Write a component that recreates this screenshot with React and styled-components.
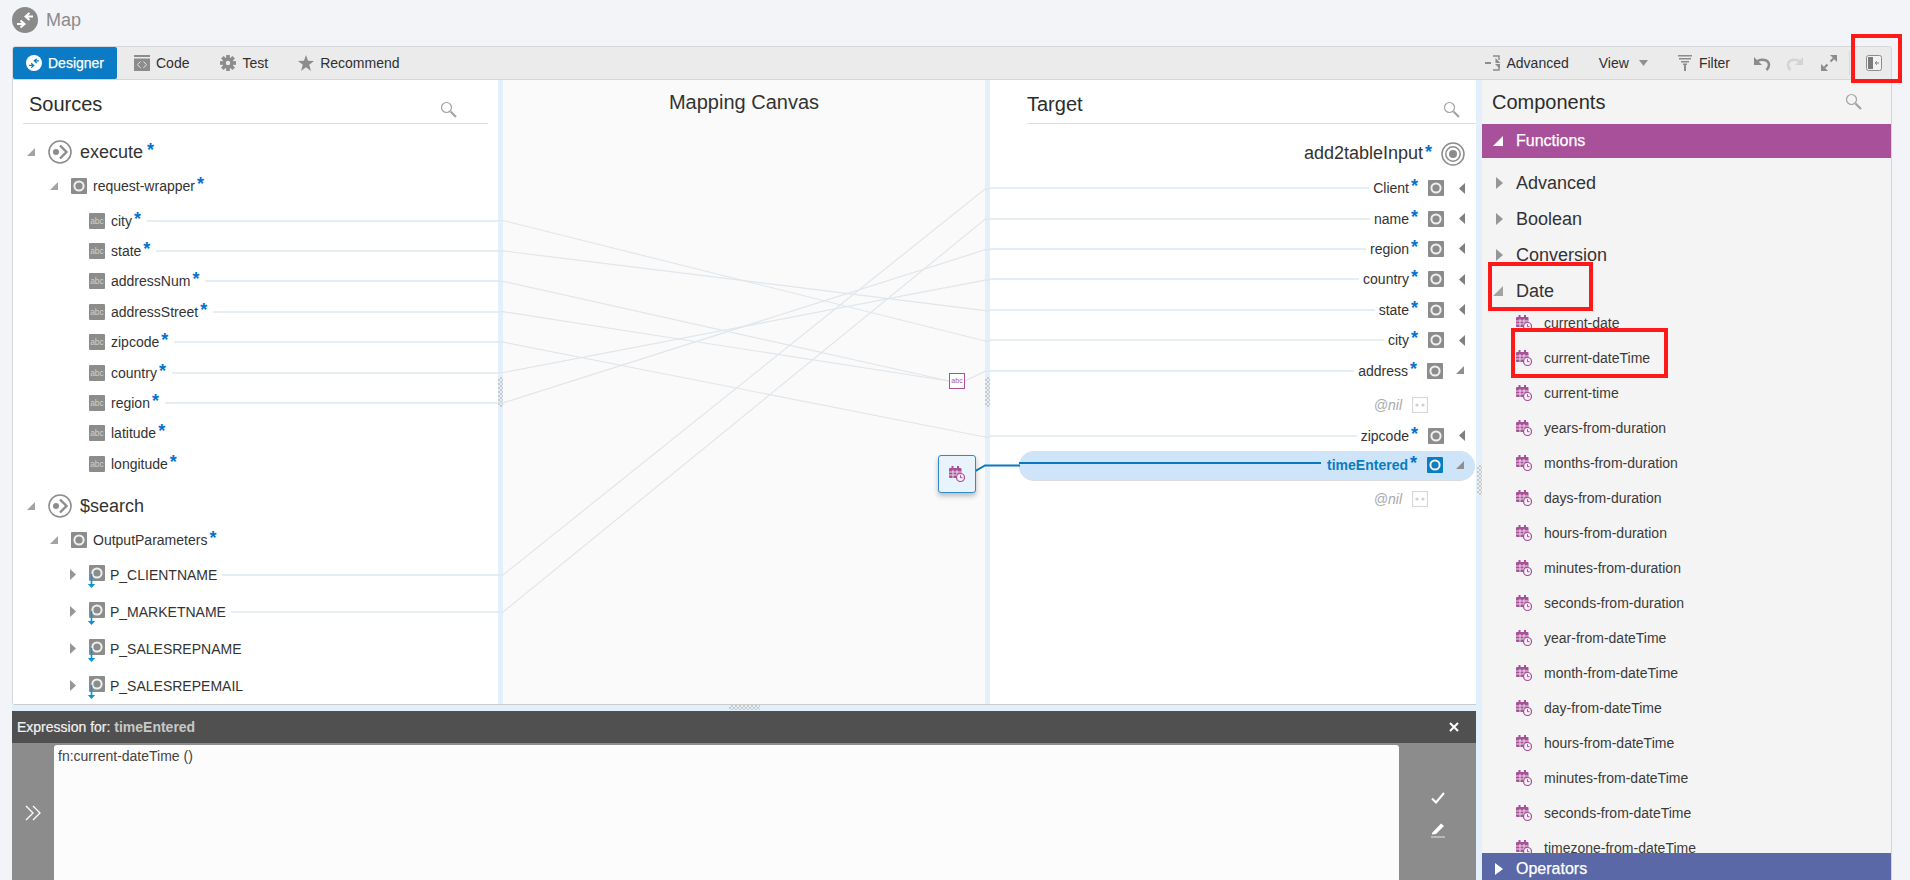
import React from "react";
import styled, { createGlobalStyle } from "styled-components";

const Global = createGlobalStyle`
  html, body { margin: 0; padding: 0; background: #f3f4f7; }
  body { font-family: "Liberation Sans", Arial, sans-serif; color: #333; font-size: 14px; }
`;

const Page = styled.div`
  position: relative;
  width: 1910px;
  height: 880px;
  overflow: hidden;
  background: #f3f4f7;
  display: flex;
  flex-direction: column;
`;
const Header = styled.header`
  height: 46px;
  flex: none;
  display: flex;
  align-items: flex-start;
  padding: 7px 0 0 12px;
  box-sizing: border-box;
  gap: 8px;
`;
const PageTitle = styled.span`
  font-size: 18px;
  line-height: 26px;
  color: #8b8b8b;
`;
const Toolbar = styled.div`
  flex: none;
  height: 34px;
  margin: 0 18px 0 12px;
  box-sizing: border-box;
  background: #ebebeb;
  border: 1px solid #d7d7d7;
  border-radius: 3px 3px 0 0;
  display: flex;
  align-items: center;
  justify-content: space-between;
`;
const ToolGroup = styled.div`
  display: flex;
  align-items: center;
  height: 100%;
`;
const ActiveTab = styled.div`
  height: 100%;
  width: 104px;
  box-sizing: border-box;
  padding-left: 13px;
  display: flex;
  align-items: center;
  gap: 6px;
  background: #0a7bc4;
  color: #fff;
  border-radius: 2px;
  -webkit-text-stroke: 0.25px #fff;
`;
const ToolItem = styled.div`
  display: flex;
  align-items: center;
  gap: ${(p) => p.$gap ?? 6}px;
  margin-left: ${(p) => p.$ml ?? 0}px;
  color: #2f2f2f;
`;
const ToolSep = styled.div`
  width: 1px;
  height: 24px;
  background: #d8d8d8;
  margin-left: 12px;
`;
const Workspace = styled.div`
  flex: 1;
  min-height: 0;
  margin: 0 18px 0 12px;
  display: flex;
`;
const LeftColumn = styled.div`
  width: 1464px;
  flex: none;
  display: flex;
  flex-direction: column;
`;
const PanelsRow = styled.div`
  position: relative;
  height: 625px;
  flex: none;
  box-sizing: border-box;
  display: flex;
  background: #fff;
  border-left: 1px solid #d6d9dc;
  border-bottom: 1px solid #ccc;
  border-radius: 0 0 0 3px;
  overflow: hidden;
`;
const Pane = styled.section`
  width: ${(p) => p.$w}px;
  flex: none;
  background: ${(p) => p.$bg || "#fff"};
  overflow: hidden;
  min-width: 0;
`;
const Divider = styled.div`
  width: ${(p) => p.$w || 5}px;
  flex: none;
  background: #e3effb;
  display: flex;
  align-items: center;
  justify-content: center;
  box-sizing: border-box;
`;
const GripV = styled.div`
  width: 5px;
  height: 30px;
  background: conic-gradient(#c9c9c9 25%, transparent 0 50%, #c9c9c9 0 75%, transparent 0) 0 0 / 4px 4px;
`;
const GripH = styled.div`
  width: 31px;
  height: 5px;
  background: conic-gradient(#c9c9c9 25%, transparent 0 50%, #c9c9c9 0 75%, transparent 0) 0 0 / 4px 4px;
`;
const PaneHead = styled.div`
  height: 44px;
  box-sizing: border-box;
  margin: 0 ${(p) => p.$mr ?? 0}px 0 ${(p) => p.$ml ?? 0}px;
  padding: 0 ${(p) => p.$pr ?? 0}px 0 ${(p) => p.$pl ?? 0}px;
  border-bottom: 1px solid #d9e0e6;
  display: flex;
  justify-content: space-between;
`;
const PaneTitle = styled.h2`
  margin: 0;
  font-size: 20px;
  font-weight: 400;
  line-height: 24px;
  padding-top: 12px;
  color: #2c2c2c;
`;
const SearchSlot = styled.div`
  padding-top: 21px;
`;
const CanvasTitle = styled.h2`
  margin: 0;
  padding-top: 10px;
  text-align: center;
  font-size: 20px;
  font-weight: 400;
  line-height: 24px;
  color: #333;
`;
const Tree = styled.div`
  padding-top: 10px;
`;
const LeafGroup = styled.div`
  padding-top: ${(p) => p.$pt ?? 0}px;
  padding-bottom: ${(p) => p.$pb ?? 0}px;
`;
const Row = styled.div`
  height: ${(p) => p.$h}px;
  padding-left: ${(p) => p.$indent}px;
  display: flex;
  align-items: center;
  gap: ${(p) => p.$gap ?? 6}px;
  font-size: ${(p) => p.$fs ?? 14}px;
  color: #333;
  white-space: nowrap;
`;
const Twisty = styled.span`
  width: ${(p) => p.$w}px;
  margin-right: -${(p) => p.$pull ?? 6}px;
  flex: none;
  display: flex;
  align-items: center;
`;
const Star = styled.span`
  color: #0572ce;
  font-weight: 700;
  font-size: 18px;
  line-height: 14px;
  margin-left: -4px;
  transform: translateY(-2px);
`;
const Leader = styled.span`
  flex: 1;
  height: 2px;
  margin: 0 ${(p) => p.$mr ?? 0}px 0 ${(p) => p.$ml ?? 0}px;
  background: #e6edf3;
`;
const TargetRow = styled.div`
  height: ${(p) => p.$h ?? 30.4}px;
  box-sizing: border-box;
  padding-top: ${(p) => p.$pt ?? 0}px;
  display: flex;
  align-items: center;
  justify-content: flex-end;
  padding-right: ${(p) => p.$pr ?? 11}px;
  gap: 6px;
  white-space: nowrap;
  font-size: ${(p) => p.$fs ?? 14}px;
`;
const SelectedRow = styled.div`
  height: 30px;
  margin-left: 29px;
  margin-right: 1px;
  display: flex;
  align-items: center;
  justify-content: flex-end;
  padding-right: 10px;
  gap: 6px;
  background: #cde4f9;
  border-radius: 15px;
  border-bottom: 1px solid #dcdcdc;
  box-sizing: border-box;
  white-space: nowrap;
`;
const SelectedLabel = styled.span`
  color: #0a7dc2;
  font-weight: 700;
`;
const SelectedLeader = styled.span`
  flex: 1;
  height: 2px;
  background: #0a78c0;
  margin-bottom: 4px;
`;
const NilLabel = styled.span`
  color: #a9a9a9;
  font-style: italic;
`;
const IconPad = styled.span`
  display: flex;
  margin: 0 ${(p) => p.$mr ?? 9}px 0 ${(p) => p.$ml ?? 4}px;
`;
const WireLayer = styled.svg`
  position: absolute;
  left: -1px;
  top: 0;
  pointer-events: none;
`;
const AbcNode = styled.div`
  position: absolute;
  left: 936px;
  top: 293px;
  width: 16px;
  height: 16px;
  box-sizing: border-box;
  border: 1.5px solid #a8519a;
  background: #fff;
  color: #a8519a;
  font-size: 7px;
  line-height: 13px;
  text-align: center;
`;
const FunctionNode = styled.div`
  position: absolute;
  left: 925px;
  top: 375px;
  width: 38px;
  height: 38px;
  box-sizing: border-box;
  border: 1px solid #2f8ccb;
  border-radius: 3px;
  background: #e9f3fb;
  box-shadow: 0 3px 5px rgba(0, 0, 0, 0.25);
  display: flex;
  align-items: center;
  justify-content: center;
`;
const Splitter = styled.div`
  height: 6px;
  flex: none;
  background: #e3effb;
  display: flex;
  justify-content: center;
`;
const ExprHead = styled.div`
  height: 34px;
  flex: none;
  box-sizing: border-box;
  background: #505050;
  border-bottom: 2px solid #8c8c8c;
  display: flex;
  align-items: center;
  justify-content: space-between;
  padding: 0 17px 0 5px;
  color: #f2f2f2;
  -webkit-text-stroke: 0.2px #f2f2f2;
`;
const ExprName = styled.b`
  color: #c8c8c8;
  -webkit-text-stroke: 0;
`;
const ExprBody = styled.div`
  flex: 1;
  display: flex;
  background: #8c8c8c;
`;
const ExprRail = styled.div`
  width: ${(p) => p.$w}px;
  flex: none;
  display: flex;
  flex-direction: ${(p) => (p.$col ? "column" : "row")};
  align-items: center;
  justify-content: ${(p) => (p.$col ? "flex-start" : "center")};
  gap: ${(p) => (p.$col ? 18 : 0)}px;
  padding-top: ${(p) => (p.$col ? 47 : 0)}px;
  box-sizing: border-box;
`;
const ExprText = styled.div`
  flex: 1;
  background: #fcfcfc;
  border-radius: 3px 3px 0 0;
  padding: 3px 4px;
  line-height: 17px;
  color: #444;
`;
const ComponentsPane = styled.aside`
  width: 409px;
  flex: none;
  background: #f4f4f4;
  border-right: 1px solid #d4d4d4;
  display: flex;
  flex-direction: column;
  overflow: hidden;
`;
const CompHead = styled.div`
  height: 44px;
  flex: none;
  display: flex;
  justify-content: space-between;
  padding: 0 29px 0 10px;
`;
const CompTitle = styled.h2`
  margin: 0;
  font-size: 20px;
  font-weight: 400;
  line-height: 24px;
  padding-top: 10px;
  color: #2c2c2c;
`;
const CompSearch = styled.div`
  padding-top: 13px;
`;
const AccordionBar = styled.div`
  height: ${(p) => p.$h}px;
  flex: none;
  box-sizing: border-box;
  padding-top: ${(p) => p.$pt ?? 0}px;
  background: ${(p) => p.$bg};
  color: #fff;
  font-size: 16px;
  display: flex;
  align-items: center;
  gap: ${(p) => p.$gap}px;
  padding-left: ${(p) => p.$pl}px;
  -webkit-text-stroke: 0.25px #fff;
`;
const CompBody = styled.div`
  flex: 1;
  min-height: 0;
  overflow: hidden;
  padding-top: 7px;
`;
const GroupRow = styled.div`
  height: 36px;
  display: flex;
  align-items: center;
  font-size: 18px;
  color: #333;
  padding-left: ${(p) => p.$pl}px;
  gap: ${(p) => p.$gap}px;
`;
const FnList = styled.div`
  margin-top: -3.5px;
`;
const FnRow = styled.div`
  height: 35px;
  display: flex;
  align-items: center;
  gap: 12px;
  padding-left: 34px;
  color: #3a3a3a;
`;
const RedBox = styled.div`
  position: absolute;
  left: ${(p) => p.$x}px;
  top: ${(p) => p.$y}px;
  width: ${(p) => p.$w}px;
  height: ${(p) => p.$h}px;
  box-sizing: border-box;
  border: 4px solid #ff1a1a;
  pointer-events: none;
`;

const GRAY = "#8c8c8c";
const Flat = ({ w = 16, h = 16, children, style }) => (
  <svg width={w} height={h} viewBox={`0 0 ${w} ${h}`} style={{ display: "block", flex: "none", ...style }}>
    {children}
  </svg>
);
const Open = ({ c = "#a3a3a3", s = 8 }) => (
  <Flat w={s + 1} h={s + 1}><polygon points={`${s},0 ${s},${s} 0,${s}`} fill={c} /></Flat>
);
const Closed = ({ c = "#969696", w = 7, h = 12 }) => (
  <Flat w={w} h={h}><polygon points={`0,0 ${w},${h / 2} 0,${h}`} fill={c} /></Flat>
);
const Left = () => (
  <Flat w={6} h={11}><polygon points="6,0 0,5.5 6,11" fill="#7f7f7f" /></Flat>
);
const Search = () => (
  <Flat w={17} h={17}>
    <circle cx="6.5" cy="6.5" r="5" fill="none" stroke="#a3a3a3" strokeWidth="1.2" />
    <line x1="10.5" y1="10.5" x2="16" y2="16" stroke="#a3a3a3" strokeWidth="2.2" />
  </Flat>
);
const SwapGlyph = ({ bg, fg, size }) => (
  <Flat w={size} h={size}>
    <g transform={`scale(${size / 26})`}>
      <circle cx="13" cy="13" r="13" fill={bg} />
      <path d="M21 9.5h-6M17.5 6l-4 3.5 4 3.5" fill="none" stroke={fg} strokeWidth="2" />
      <path d="M5 17h6M8.5 13.5l4 3.5-4 3.5" fill="none" stroke={fg} strokeWidth="2" />
    </g>
  </Flat>
);
const CodeIcon = () => (
  <Flat>
    <rect x="0" y="0" width="16" height="2" fill={GRAY} />
    <rect x="0" y="3.5" width="16" height="12.5" fill={GRAY} />
    <path d="M6.5 6.5 3.5 9.7l3 3.2M9.5 6.5l3 3.2-3 3.2" fill="none" stroke="#e6e6e6" strokeWidth="1" />
  </Flat>
);
const GearIcon = () => (
  <Flat>
    <g fill={GRAY}>
      <circle cx="8" cy="8" r="5.7" />
      {[0, 45, 90, 135, 180, 225, 270, 315].map((a) => (
        <rect key={a} x="6.2" y="0" width="3.6" height="3.5" transform={`rotate(${a} 8 8)`} />
      ))}
    </g>
    <circle cx="8" cy="8" r="2.2" fill="#ebebeb" />
  </Flat>
);
const StarIcon = () => (
  <Flat>
    <polygon points="8,0 10,5.8 16,6 11.2,9.7 13,16 8,12.3 3,16 4.8,9.7 0,6 6,5.8" fill={GRAY} />
  </Flat>
);
const AdvancedIcon = () => (
  <Flat>
    <path d="M0 8h6" stroke={GRAY} strokeWidth="2" />
    <path d="M8 1h6v4" fill="none" stroke={GRAY} strokeWidth="1.4" />
    <polygon points="10.5,3 10.5,8 15.5,8" fill={GRAY} />
    <path d="M8 15h6v-4" fill="none" stroke={GRAY} strokeWidth="1.4" />
    <polygon points="10,9 15,9 15,14" fill={GRAY} />
  </Flat>
);
const CaretDown = () => (
  <Flat w={9} h={6}><polygon points="0,0 9,0 4.5,6" fill="#8f8f8f" /></Flat>
);
const FilterIcon = () => (
  <Flat w={14} h={16}>
    <rect x="0" y="0" width="14" height="1.5" fill={GRAY} />
    <rect x="1" y="3" width="12" height="1.5" fill={GRAY} />
    <rect x="3" y="6" width="8" height="1.5" fill={GRAY} />
    <rect x="5" y="8.5" width="4" height="1.5" fill={GRAY} />
    <rect x="6" y="10" width="2" height="6" fill={GRAY} />
  </Flat>
);
const UndoIcon = ({ c = GRAY, flip }) => (
  <Flat w={17} h={15} style={flip ? { transform: "scaleX(-1)" } : undefined}>
    <polygon points="0,1 0,9 8,9" fill={c} />
    <path d="M3 5.5c4-3 12-2 12 3.5 0 2-1 3.5-2.5 5" fill="none" stroke={c} strokeWidth="2.6" />
  </Flat>
);
const ExpandIcon = () => (
  <Flat>
    <polygon points="9,0 16,0 16,7" fill={GRAY} />
    <polygon points="0,9 7,16 0,16" fill={GRAY} />
    <path d="M9.5 6.5l3-3M6.5 9.5l-3 3" stroke={GRAY} strokeWidth="2" />
  </Flat>
);
const DockIcon = () => (
  <Flat>
    <rect x="0.5" y="0.5" width="15" height="15" rx="2" fill="#f2f2f2" stroke={GRAY} />
    <rect x="2" y="2" width="5" height="12" fill="#7b7b7b" />
    <path d="M13 8H9.5M11 6.3 9.2 8l1.8 1.7" fill="none" stroke="#7b7b7b" strokeWidth="1" />
  </Flat>
);
const RingSquare = ({ bg = GRAY }) => (
  <Flat>
    <rect width="16" height="16" fill={bg} rx="1" />
    <circle cx="8" cy="8" r="4.6" fill="none" stroke="#f0f0f0" strokeWidth="2" />
  </Flat>
);
const AbcSquare = styled.span`
  width: 16px;
  height: 16px;
  flex: none;
  background: ${GRAY};
  border-radius: 1px;
  color: #cfcfcf;
  font-size: 8.5px;
  line-height: 16px;
  text-align: center;
`;
const ElementIcon = () => (
  <Flat w={16} h={24} style={{ overflow: "visible", marginTop: 5 }}>
    <rect y="0" width="16" height="16" fill={GRAY} rx="1" />
    <circle cx="8" cy="8" r="4.6" fill="none" stroke="#f0f0f0" strokeWidth="2" />
    <path d="M2.5 9v12" stroke="#0a94d6" strokeWidth="1.6" />
    <polygon points="-1.2,19 6.2,19 2.5,23" fill="#0a94d6" />
  </Flat>
);
const OpIcon = () => (
  <Flat w={24} h={24}>
    <circle cx="12" cy="12" r="11" fill="none" stroke={GRAY} strokeWidth="1.6" />
    <circle cx="8" cy="12" r="3" fill={GRAY} />
    <path d="M12 5.5 18.5 12 12 18.5" fill="none" stroke={GRAY} strokeWidth="2.4" />
  </Flat>
);
const TargetIcon = () => (
  <Flat w={24} h={24}>
    <circle cx="12" cy="12" r="11" fill="none" stroke={GRAY} strokeWidth="1.5" />
    <circle cx="12" cy="12" r="7.2" fill="none" stroke={GRAY} strokeWidth="1.5" />
    <circle cx="12" cy="12" r="4" fill={GRAY} />
  </Flat>
);
const NilIcon = () => (
  <Flat>
    <rect x="0.5" y="0.5" width="15" height="15" fill="#fff" stroke="#d8d8d8" strokeWidth="1.2" />
    <circle cx="5" cy="8" r="1.6" fill="#cfcfcf" />
    <circle cx="11" cy="8" r="1.6" fill="#cfcfcf" />
  </Flat>
);
const CalClock = () => (
  <Flat w={16} h={16}>
    <g fill="#a8519a">
      <rect x="2.5" y="0" width="2" height="3" />
      <rect x="8" y="0" width="2" height="3" />
      <rect x="0" y="2" width="12.5" height="10" rx="1" />
    </g>
    <path d="M0 6h12.5M0 9h12.5M4 4v8M8 4v8" stroke="#f4f4f4" strokeWidth="0.8" />
    <circle cx="11.5" cy="11.5" r="4" fill="#f7f0f6" stroke="#a8519a" strokeWidth="1.2" />
    <path d="M11.5 9.2v2.5h2" fill="none" stroke="#a8519a" strokeWidth="1" />
  </Flat>
);
const Chevrons = () => (
  <Flat w={16} h={16}>
    <path d="M1 1l7 7-7 7M8 1l7 7-7 7" fill="none" stroke="#fff" strokeWidth="1.3" />
  </Flat>
);
const CheckIcon = () => (
  <Flat w={14} h={12}>
    <path d="M1 6.5 5 10.5 13 1" fill="none" stroke="#fff" strokeWidth="2" />
  </Flat>
);
const PencilIcon = () => (
  <Flat w={14} h={16}>
    <polygon points="1,11 10,1.5 13,4 5,12 1,12.5" fill="#fff" />
    <rect x="0" y="14.5" width="14" height="1" fill="#e4e4e4" />
  </Flat>
);
const CloseIcon = () => (
  <Flat w={10} h={10}>
    <path d="M1 1l8 8M9 1l-8 8" stroke="#fff" strokeWidth="2" />
  </Flat>
);

const requestLeaves = [
  ["city", true], ["state", true], ["addressNum", true], ["addressStreet", true],
  ["zipcode", true], ["country", true], ["region", true], ["latitude", false], ["longitude", false],
];
const outputs = [
  ["P_CLIENTNAME", true], ["P_MARKETNAME", true], ["P_SALESREPNAME", false], ["P_SALESREPEMAIL", false],
];
const targets = ["Client", "name", "region", "country", "state", "city"];
const groups = ["Advanced", "Boolean", "Conversion"];
const functions = [
  "current-date", "current-dateTime", "current-time", "years-from-duration", "months-from-duration",
  "days-from-duration", "hours-from-duration", "minutes-from-duration", "seconds-from-duration",
  "year-from-dateTime", "month-from-dateTime", "day-from-dateTime", "hours-from-dateTime",
  "minutes-from-dateTime", "seconds-from-dateTime", "timezone-from-dateTime",
];
const wire = (y1, y2) => `M498 ${y1}H503L985 ${y2}H990`;
const wires = [
  wire(220.5, 341), wire(250.9, 310.6), wire(342.1, 437), wire(372.5, 280.2), wire(402.9, 249.8),
  wire(575, 189), wire(612, 219.4),
  "M498 281.3H503L949 381", "M498 311.7H503L949 381", "M965 381L985 371.4H990",
];

export default function App() {
  return (
    <Page>
      <Global />
      <Header>
        <SwapGlyph bg="#8a8a8a" fg="#fff" size={26} />
        <PageTitle>Map</PageTitle>
      </Header>
      <Toolbar>
        <ToolGroup>
          <ActiveTab><SwapGlyph bg="#fff" fg="#0a7bc4" size={16} />Designer</ActiveTab>
          <ToolItem $ml={17}><CodeIcon />Code</ToolItem>
          <ToolItem $ml={31}><GearIcon />Test</ToolItem>
          <ToolItem $ml={30}><StarIcon />Recommend</ToolItem>
        </ToolGroup>
        <ToolGroup>
          <ToolItem><AdvancedIcon />Advanced</ToolItem>
          <ToolItem $ml={30} $gap={10}>View<CaretDown /></ToolItem>
          <ToolItem $ml={30} $gap={7}><FilterIcon />Filter</ToolItem>
          <ToolItem $ml={24}><UndoIcon /></ToolItem>
          <ToolItem $ml={15}><UndoIcon c="#d4d4d4" flip /></ToolItem>
          <ToolItem $ml={18}><ExpandIcon /></ToolItem>
          <ToolSep />
          <ToolItem $ml={16}><DockIcon /></ToolItem>
          <ToolItem $ml={9} />
        </ToolGroup>
      </Toolbar>
      <Workspace>
        <LeftColumn>
          <PanelsRow>
            <Pane $w={485}>
              <PaneHead $ml={10} $mr={10} $pl={6} $pr={31}>
                <PaneTitle>Sources</PaneTitle>
                <SearchSlot><Search /></SearchSlot>
              </PaneHead>
              <Tree>
                <Row $h={36} $indent={14} $fs={18} $gap={8}>
                  <Twisty $w={21} $pull={8}><Open /></Twisty><OpIcon />execute<Star>*</Star>
                </Row>
                <Row $h={32} $indent={37}>
                  <Twisty $w={21}><Open /></Twisty><RingSquare />request-wrapper<Star>*</Star>
                </Row>
                <LeafGroup $pt={3.5} $pb={9}>
                  {requestLeaves.map(([name, wired]) => (
                    <Row key={name} $h={30.4} $indent={76}>
                      <AbcSquare>abc</AbcSquare>{name}<Star>*</Star>
                      {wired && <Leader />}
                    </Row>
                  ))}
                </LeafGroup>
                <Row $h={36} $indent={14} $fs={18} $gap={8}>
                  <Twisty $w={21} $pull={8}><Open /></Twisty><OpIcon />$search
                </Row>
                <Row $h={32} $indent={37}>
                  <Twisty $w={21}><Open /></Twisty><RingSquare />OutputParameters<Star>*</Star>
                </Row>
                {outputs.map(([name, wired]) => (
                  <Row key={name} $h={37} $indent={57} $gap={5}>
                    <Twisty $w={19} $pull={5}><Closed w={6} h={11} /></Twisty><ElementIcon />{name}
                    {wired && <Leader />}
                  </Row>
                ))}
              </Tree>
            </Pane>
            <Divider><GripV /></Divider>
            <Pane $w={482} $bg="#fafafa">
              <CanvasTitle>Mapping Canvas</CanvasTitle>
            </Pane>
            <Divider><GripV /></Divider>
            <Pane $w={486}>
              <PaneHead $ml={37} $pr={16}>
                <PaneTitle>Target</PaneTitle>
                <SearchSlot><Search /></SearchSlot>
              </PaneHead>
              <Tree>
                <TargetRow $h={39} $fs={18}>
                  add2tableInput<Star>*</Star><IconPad $ml={3} $mr={0}><TargetIcon /></IconPad>
                </TargetRow>
                {targets.map((name) => (
                  <TargetRow key={name}>
                    <Leader $mr={-2} />{name}<Star>*</Star>
                    <IconPad><RingSquare /></IconPad><Left />
                  </TargetRow>
                ))}
                <TargetRow>
                  <Leader $mr={-2} />address<Star>*</Star>
                  <IconPad $mr={7}><RingSquare /></IconPad><Open c="#8f8f8f" />
                </TargetRow>
                <TargetRow $h={34.6} $pr={48} $pt={3}><NilLabel>@nil</NilLabel><IconPad $mr={0}><NilIcon /></IconPad></TargetRow>
                <TargetRow>
                  <Leader $mr={-2} />zipcode<Star>*</Star>
                  <IconPad><RingSquare /></IconPad><Left />
                </TargetRow>
                <SelectedRow>
                  <SelectedLeader />
                  <SelectedLabel>timeEntered</SelectedLabel><Star>*</Star>
                  <IconPad $mr={7}><RingSquare bg="#0a7dc2" /></IconPad><Open c="#8f8f8f" />
                </SelectedRow>
                <TargetRow $h={35} $pr={48} $pt={2}><NilLabel>@nil</NilLabel><IconPad $mr={0}><NilIcon /></IconPad></TargetRow>
              </Tree>
            </Pane>
            <WireLayer width="1465" height="625" viewBox="12 80 1465 625">
              <g fill="none" stroke="#e0e6eb" strokeWidth="1.2">
                {wires.map((d) => <path key={d} d={d} />)}
              </g>
              <path d="M965 477L985 465.5H1020" fill="none" stroke="#0a78c0" strokeWidth="2" />
            </WireLayer>
            <AbcNode>abc</AbcNode>
            <FunctionNode><CalClock /></FunctionNode>
          </PanelsRow>
          <Splitter><GripH /></Splitter>
          <ExprHead>
            <span>Expression for: <ExprName>timeEntered</ExprName></span>
            <CloseIcon />
          </ExprHead>
          <ExprBody>
            <ExprRail $w={42}><Chevrons /></ExprRail>
            <ExprText>fn:current-dateTime ()</ExprText>
            <ExprRail $w={77} $col><CheckIcon /><PencilIcon /></ExprRail>
          </ExprBody>
        </LeftColumn>
        <Divider $w={6}><GripV /></Divider>
        <ComponentsPane>
          <CompHead>
            <CompTitle>Components</CompTitle>
            <CompSearch><Search /></CompSearch>
          </CompHead>
          <AccordionBar $h={34} $bg="#a8519a" $pl={11} $gap={12}>
            <Open c="#fff" s={10} />Functions
          </AccordionBar>
          <CompBody>
            {groups.map((g) => (
              <GroupRow key={g} $pl={14} $gap={13}><Closed />{g}</GroupRow>
            ))}
            <GroupRow $pl={11} $gap={12}><Open c="#a3a3a3" s={10} />Date</GroupRow>
            <FnList>
              {functions.map((f) => (
                <FnRow key={f}><CalClock />{f}</FnRow>
              ))}
            </FnList>
          </CompBody>
          <AccordionBar $h={27} $pt={5} $bg="#5a68a8" $pl={13} $gap={13}>
            <Closed c="#fff" w={8} h={12} />Operators
          </AccordionBar>
        </ComponentsPane>
      </Workspace>
      <RedBox $x={1851} $y={34} $w={51} $h={49} />
      <RedBox $x={1488} $y={262} $w={105} $h={49} />
      <RedBox $x={1511} $y={328} $w={157} $h={50} />
    </Page>
  );
}
